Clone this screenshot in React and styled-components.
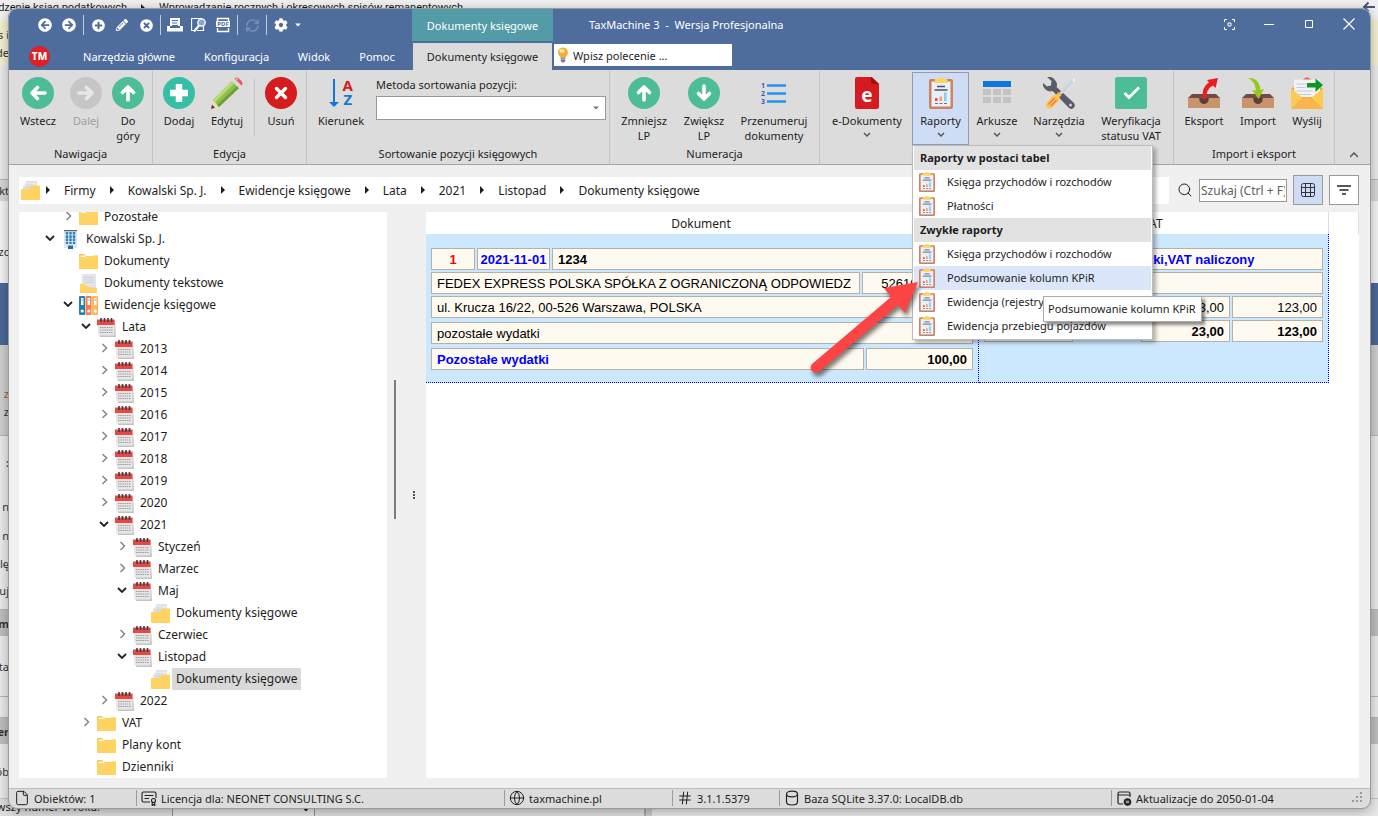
import React from 'react'
import styled, { createGlobalStyle } from 'styled-components'
import {
  FaArrowCircleLeft, FaArrowCircleRight, FaPlusCircle, FaPencilAlt, FaTimesCircle, FaCog,
} from 'react-icons/fa'
import { Search, Globe, Hash, File, RefreshCw } from 'lucide-react'

const GlobalStyle = createGlobalStyle`
  * { box-sizing: border-box; }
  body {
    margin: 0;
    font-family: "Noto Sans", "Open Sans", sans-serif;
    font-size: 12px;
    color: #1e1e1e;
  }
  button, input, select { font: inherit; color: inherit; }
  button { background: none; border: 0; padding: 0; }
  a { color: inherit; text-decoration: none; }
  ul { list-style: none; margin: 0; padding: 0; }
  svg { display: block; flex: none; }
`

/* ---------- desktop and the window behind ---------- */

const Desktop = styled.div`
  position: relative;
  display: flex;
  height: 100vh;
  padding: 9px 8px 8px 9px;
  overflow: hidden;
`

const Backdrop = styled.div`
  position: absolute;
  inset: 0;
  display: flex;
  flex-direction: column;
  overflow: hidden;
  background: #e9e9e9;
  font-size: 11px;
`

const BackTop = styled.div`
  display: flex;
  align-items: center;
  gap: 12px;
  height: 20px;
  flex: none;
  padding-bottom: 4px;
  background: #f0f0f0;
  font-family: Roboto, "Noto Sans", sans-serif;
  line-height: 14px;
  white-space: nowrap;
`

const BackClip = styled.div`
  display: flex;
  justify-content: flex-end;
  width: 127px;
  overflow: hidden;
`

const BackArrow = styled.div`
  margin-left: auto;
  padding: 0 2px 2px 0;
`

const BackRow = styled.div`
  display: flex;
  align-items: center;
  flex: none;
  height: ${(p) => p.$h}px;
  background: ${(p) => p.$bg || 'transparent'};
  border-top: ${(p) => (p.$line ? '1px solid #b4b4b4' : '0')};
  color: ${(p) => p.$color || '#333'};
  font-weight: ${(p) => (p.$bold ? 700 : 400)};
  white-space: nowrap;
`

const BackText = styled.span`
  display: flex;
  justify-content: flex-end;
  width: ${(p) => p.$w || 9}px;
  overflow: hidden;
`

const BackBottom = styled.div`
  display: flex;
  align-items: flex-start;
  flex: 1;
  background: linear-gradient(90deg, #dcdcdc 644px, #a8a8a8 644px, #a8a8a8 646px, #c8c8c8 646px, #c8c8c8 652px, #e6e6e6 652px);
  border-top: 1px solid #c4c4c4;
  white-space: nowrap;
`

const BackNumber = styled.label`
  display: flex;
  gap: 72px;
`

const BackSelect = styled.select`
  width: 143px;
  height: 18px;
  border: 1px solid #8e8e8e;
  background: #e3e3e3;
`

/* ---------- main window ---------- */

const Window = styled.div`
  position: relative;
  display: flex;
  flex: 1;
  flex-direction: column;
  min-width: 0;
  background: #f0f0f0;
  border-radius: 8px;
  outline: 1px solid #9a9a9a;
  box-shadow: 0 2px 12px rgba(0, 0, 0, 0.35);
`

const Header = styled.header`
  flex: none;
  color: #fff;
  background: #4f6d9c;
  border-radius: 8px 8px 0 0;
  font-size: 11px;
`

const TitleRow = styled.div`
  display: flex;
  height: 32px;
`

const QuickBar = styled.div`
  display: flex;
  align-items: center;
  gap: 10px;
  width: 403px;
  padding-left: 29px;
`

const QuickButton = styled.button`
  display: flex;
  align-items: center;
  justify-content: center;
  width: 14px;
  height: 20px;
  color: ${(p) => (p.disabled ? '#7f95b9' : '#fff')};
`

const QuickLine = styled.span`
  width: 1px;
  height: 20px;
  margin: 0 -3px;
  background: #c3cbd9;
`

const QuickMore = styled.button`
  display: flex;
  margin-left: -4px;
`

const ContextTab = styled.div`
  display: flex;
  align-items: center;
  justify-content: center;
  width: 141px;
  background: #539ba6;
`

const Title = styled.h1`
  margin: 0;
  padding-left: 36px;
  font-size: 11px;
  font-weight: 400;
  line-height: 32px;
  white-space: pre;
`

const WindowButtons = styled.div`
  display: flex;
  margin-left: auto;
  padding-right: 1px;
`

const WindowButton = styled.button`
  display: flex;
  align-items: center;
  justify-content: center;
  width: 40px;
  height: 30px;
`

const TabRow = styled.div`
  display: flex;
  height: 29px;
  padding-left: 20px;
`

const Logo = styled.button`
  width: 21px;
  height: 21px;
  margin: 5px 22px 0 0;
  border-radius: 50%;
  background: #e01f26;
  color: #fff;
  font-size: 10px;
  font-weight: 800;
  line-height: 21px;
`

const Tab = styled.button`
  width: ${(p) => p.$w}px;
  height: 27px;
  margin-top: 2px;
  color: ${(p) => (p.$active ? '#1e1e1e' : '#fff')};
  background: ${(p) => (p.$active ? '#dcdcdc' : 'transparent')};
`

const CommandBox = styled.label`
  display: flex;
  align-items: center;
  gap: 4px;
  width: 178px;
  height: 22px;
  margin: 3px 0 0 2px;
  padding-left: 3px;
  background: #fff;
`

const CommandInput = styled.input`
  flex: 1;
  min-width: 0;
  padding: 0;
  border: 0;
  outline: 0;
  background: none;
  &::placeholder { color: #1e1e1e; opacity: 1; }
`

/* ---------- ribbon ---------- */

const Ribbon = styled.div`
  display: flex;
  flex: none;
  height: 95px;
  background: #dcdcdc;
  border-bottom: 1px solid #a3a3a3;
  font-size: 11px;
`

const Group = styled.section`
  display: flex;
  flex-direction: column;
  flex: none;
  width: ${(p) => p.$w}px;
  border-right: 1px solid #c4c4c4;
`

const GroupItems = styled.div`
  display: flex;
  flex: 1;
  padding: 2px 0 0 ${(p) => p.$pad || 4}px;
`

const GroupTitle = styled.div`
  height: 20px;
  line-height: 18px;
  text-align: center;
`

const RibbonButton = styled.button`
  display: flex;
  flex-direction: column;
  align-items: center;
  flex: none;
  width: ${(p) => p.$w}px;
  height: 73px;
  padding-top: 4px;
  border: 1px solid ${(p) => (p.$open ? '#8c9dba' : 'transparent')};
  background: ${(p) => (p.$open ? '#cfdcf5' : 'transparent')};
  color: ${(p) => (p.disabled ? '#a0a0a0' : '#1e1e1e')};
  line-height: 15px;
  span { margin-top: 4px; }
`

const DropArrow = styled.svg`
  margin-top: 4px;
`

const ButtonLine = styled.div`
  width: 1px;
  height: 57px;
  margin: 7px 2px 0 3px;
  background: #c4c4c4;
`

const SortField = styled.label`
  display: flex;
  flex-direction: column;
  gap: 4px;
  margin-left: 5px;
  padding-top: 5px;
  line-height: 15px;
`

const SelectWrap = styled.span`
  display: flex;
  align-items: center;
  width: 230px;
  height: 24px;
  padding-right: 5px;
  border: 1px solid #999;
  background: #fff;
`

const SortSelect = styled.select`
  flex: 1;
  height: 22px;
  border: 0;
  background: none;
  appearance: none;
`

const MenuAnchor = styled.div`
  position: relative;
  z-index: 5;
  margin-left: 2px;
`

const Collapse = styled.button`
  display: flex;
  flex: 1;
  align-items: flex-end;
  justify-content: center;
  padding: 0 0 6px 2px;
`

/* ---------- reports menu ---------- */

const Menu = styled.div`
  position: absolute;
  top: 73px;
  left: 0;
  width: 241px;
  padding: 0 1px 1px;
  border: 1px solid #bcbcbc;
  background: #fff;
  box-shadow: 3px 3px 4px rgba(0, 0, 0, 0.3);
`

const MenuHead = styled.div`
  height: 24px;
  padding-left: 6px;
  background: #e2e2e2;
  font-weight: 700;
  line-height: 24px;
`

const MenuItem = styled.button`
  display: flex;
  align-items: center;
  gap: 12px;
  width: 100%;
  height: 24px;
  padding-left: 5px;
  background: ${(p) => (p.$active ? '#dbe6fb' : 'transparent')};
  line-height: 22px;
  white-space: nowrap;
`

const Tooltip = styled.div`
  position: absolute;
  top: 150px;
  left: 130px;
  height: 26px;
  padding: 0 5px 0 4px;
  border: 1px solid #ababab;
  background: #fff;
  box-shadow: 3px 3px 3px rgba(0, 0, 0, 0.45);
  line-height: 24px;
  white-space: nowrap;
`

const Pointer = styled.svg`
  position: absolute;
  top: 134px;
  left: -103px;
  filter: drop-shadow(2px 4px 2px rgba(0, 0, 0, 0.5));
  pointer-events: none;
`

/* ---------- address bar ---------- */

const AddressRow = styled.div`
  display: flex;
  align-items: center;
  flex: none;
  height: 50px;
  padding: 0 11px 0 10px;
`

const Crumbs = styled.nav`
  display: flex;
  align-items: center;
  flex: 1;
  gap: 12px;
  height: 27px;
  padding-left: 2px;
  background: #fff;
`

const CrumbIcon = styled.a`
  margin-right: -8px;
`

const SearchBox = styled.label`
  display: flex;
  align-items: center;
  gap: 6px;
  margin-left: 8px;
`

const SearchInput = styled.input`
  width: 88px;
  height: 23px;
  padding: 0 1px;
  border: 1px solid #999;
  border-radius: 0;
  background: #fff;
  &::placeholder { color: #606060; opacity: 1; }
`

const ViewButton = styled.button`
  display: flex;
  align-items: center;
  justify-content: center;
  width: 30px;
  height: 30px;
  margin-left: 6px;
  border: 1px solid #999;
  background: ${(p) => (p.$on ? '#cfdcf5' : '#fff')};
`

/* ---------- work area ---------- */

const Work = styled.main`
  display: flex;
  flex: 1;
  min-height: 0;
  margin: -3px 11px 10px 10px;
`

const TreePane = styled.ul`
  width: 368px;
  overflow: hidden;
  background: #fff;
`

const TreeRow = styled.li`
  display: flex;
  align-items: center;
  height: 22px;
  padding-left: ${(p) => 22 + p.$level * 18}px;
  &:first-child { margin-top: -6px; }
`

const Toggle = styled.button`
  display: flex;
  align-items: center;
  justify-content: center;
  width: 18px;
  height: 20px;
  margin-right: 2px;
  padding-bottom: 2px;
`

const TreeLabel = styled.a`
  margin-left: 2px;
  padding: 0 4px;
  border-radius: 1px;
  background: ${(p) => (p.$selected ? '#d9d9d9' : 'transparent')};
  line-height: 22px;
`

const Scroll = styled.div`
  width: 17px;
  padding: 168px 0 0 7px;
`

const Thumb = styled.div`
  width: 2px;
  height: 139px;
  background: #7d7d7d;
`

const Splitter = styled.div`
  display: flex;
  align-items: center;
  justify-content: center;
  width: 22px;
  padding-right: 2px;
`

const GridPane = styled.div`
  flex: 1;
  min-width: 0;
  background: #fff;
`

const Grid = styled.table`
  width: 100%;
  border-collapse: separate;
  border-spacing: 0;
  table-layout: fixed;
`

const Col = styled.col`
  width: ${(p) => (p.$w ? `${p.$w}px` : 'auto')};
`

const Th = styled.th`
  height: 22px;
  padding: 0 2px 0 0;
  border-right: 1px solid #dedede;
  font-weight: 400;
`

const Td = styled.td`
  height: 149px;
  padding: 14px 5px 0;
  vertical-align: top;
  background: #cce8ff;
  border-right: 1px dotted #00f;
  border-bottom: 1px dotted #00f;
  font-family: "Liberation Sans", Arial, sans-serif;
  font-size: 13px;
`

const CellRow = styled.div`
  display: flex;
  gap: 2px;
  margin-bottom: ${(p) => p.$gap || 2}px;
`

const Cell = styled.div`
  flex: ${(p) => (p.$w ? `0 0 ${p.$w}px` : '1 1 0')};
  min-width: 0;
  height: 22px;
  padding: 0 ${(p) => (p.$align === 'center' ? 2 : 5)}px;
  overflow: hidden;
  border: 1px solid #b5b0a8;
  background: #fffaf0;
  color: ${(p) => p.$color || '#000'};
  font-weight: ${(p) => (p.$bold ? 700 : 400)};
  line-height: 21px;
  text-align: ${(p) => p.$align || 'left'};
  white-space: nowrap;
`

const CellGap = styled.div`
  flex: 1;
`

/* ---------- status bar ---------- */

const StatusBar = styled.footer`
  display: flex;
  align-items: center;
  flex: none;
  height: 20px;
  padding: 0 0 1px 5px;
  background: #dcdcdc;
  border-top: 1px solid #bdbdbd;
  border-radius: 0 0 8px 8px;
  font-size: 11px;
`

const StatusItem = styled.div`
  display: flex;
  align-items: center;
  gap: 4px;
  flex: ${(p) => (p.$w ? `0 0 ${p.$w}px` : '1')};
  height: 16px;
  padding-left: ${(p) => (p.$first ? 0 : 4)}px;
  border-left: ${(p) => (p.$first ? '0' : '1px solid #9c9c9c')};
  white-space: nowrap;
`

/* ---------- drawings ---------- */

const arrowPaths = {
  left: 'M23 16H10M15.500 10.500L10 16l5.500 5.500',
  right: 'M9 16h13M16.500 10.500L22 16l-5.500 5.500',
  up: 'M16 23V10M10.500 15.500L16 10l5.500 5.500',
  down: 'M16 9v13M10.500 16.500L16 22l5.500-5.500',
}

const ArrowIcon = ({ dir, fill = '#4dbd97', stroke = '#fff' }) => (
  <svg width="32" height="32" viewBox="0 0 32 32" fill="none">
    <circle cx="16" cy="16" r="16" fill={fill} />
    <path d={arrowPaths[dir]} stroke={stroke} strokeWidth="3.6" strokeLinecap="round" strokeLinejoin="round" />
  </svg>
)

const AddIcon = () => (
  <svg width="32" height="32" viewBox="0 0 32 32">
    <circle cx="16" cy="16" r="16" fill="#34bfa6" />
    <path d="M16 7v18M7 16h18" stroke="#fff" strokeWidth="6.500" />
  </svg>
)

const DeleteIcon = () => (
  <svg width="32" height="32" viewBox="0 0 32 32">
    <circle cx="16" cy="16" r="16" fill="#d41c1f" />
    <path d="M11.500 11.500l9 9M20.500 11.500l-9 9" stroke="#fff" strokeWidth="3.400" strokeLinecap="round" />
  </svg>
)

const PencilIcon = () => (
  <svg width="32" height="32" viewBox="0 0 32 32">
    <path d="M0 32l2-9 6 7z" fill="#f4dcae" />
    <path d="M0 32l1-4.500 3 3.300z" fill="#444" />
    <path d="M2 23L21 4l7 7L8 30z" fill="#8fc04c" />
    <path d="M2 23L21 4l2.300 2.300L4 25.500z" fill="#b5dc78" />
    <path d="M6 28L26 9l2 2L8 30z" fill="#6d9f35" />
    <path d="M21 4l2.500-2.500 7 7L28 11z" fill="#d8dce0" />
    <path d="M23.500 1.500Q26-.5 28.500 2l2 2q2 2.500 0 4.500z" fill="#ee5563" />
    <path d="M24.500 1.500Q26 .3 27.500 1.500l-1.500 2.400z" fill="#f9a4aa" />
  </svg>
)

const SortIcon = () => (
  <svg width="32" height="32" viewBox="0 0 32 32" fontFamily="Noto Sans" fontWeight="700" fontSize="15">
    <path d="M9 2v25" stroke="#1177dd" strokeWidth="2" />
    <path d="M4 25h10l-5 5z" fill="#1177dd" />
    <text x="17.500" y="13.500" fill="#d41c1f">A</text>
    <text x="18.500" y="28" fill="#1177dd">Z</text>
  </svg>
)

const RenumberIcon = () => (
  <svg width="32" height="32" viewBox="0 0 32 32" fontFamily="Noto Sans" fontWeight="700" fontSize="7">
    <path d="M9 8.500h19M9 16.500h19M9 24.500h19" stroke="#2492f0" strokeWidth="2.600" />
    <text x="3" y="11" fill="#3f5ab0">1</text>
    <text x="3" y="19" fill="#3f5ab0">2</text>
    <text x="3" y="27" fill="#3f5ab0">3</text>
  </svg>
)

const EDocIcon = () => (
  <svg width="32" height="32" viewBox="0 0 32 32">
    <path d="M6 0h15l7 7v23a2 2 0 0 1-2 2H6a2 2 0 0 1-2-2V2a2 2 0 0 1 2-2z" fill="#d51b1f" />
    <path d="M20 0l8 7h-6q-1.500-.3-2-2z" fill="#a30f00" />
    <text x="16" y="25" fill="#fff" fontFamily="Noto Sans" fontWeight="700" fontSize="19" textAnchor="middle">e</text>
  </svg>
)

const ReportIcon = ({ w = 32, h = 32 }) => (
  <svg width={w} height={h} viewBox="4 0 24 32" preserveAspectRatio="none">
    <rect x="4" y="2" width="24" height="30" rx="2" fill="#d0835b" />
    <rect x="6.500" y="4.500" width="19" height="25" fill="#eaf0fa" />
    <path d="M10.500 2h2.500q.5-2 3-2t3 2h2.500q.8 0 .8 1v3H9.700V3q0-1 .8-1z" fill="#fcd462" />
    <path d="M12 9.500h8M9.500 13h13" stroke="#4a5162" strokeWidth="1.300" />
    <path d="M10 21h2.600v3H10z" fill="#f0504b" />
    <path d="M14.500 19.500h2.600V24h-2.600z" fill="#f5a268" />
    <path d="M19 15.500h2.600V24H19z" fill="#8ccbee" />
    <path d="M10 26.500h3m1.500 0h3m1.500 0h3" stroke="#6c7282" strokeWidth="1.100" />
  </svg>
)

const LargeReport = () => (
  <svg width="32" height="32" viewBox="0 0 32 32">
    <svg x="4" width="24" height="32"><ReportIcon w="24" /></svg>
  </svg>
)

const SheetIcon = () => (
  <svg width="32" height="32" viewBox="0 0 32 32">
    <path d="M2 4h28v6H2z" fill="#1177dd" />
    <path d="M2 12h8v6H2zM12 12h8v6h-8zM22 12h8v6h-8zM2 20h8v6H2zM12 20h8v6h-8zM22 20h8v6h-8z" fill="#c3c3c3" />
  </svg>
)

const ToolsIcon = () => (
  <svg width="32" height="32" viewBox="0 0 32 32">
    <path d="M4 0Q9-1 12 3t1.500 7L31 26q2 3-.5 5t-5-.5L9.500 14Q5 15.500 2 12T0 6l4 3.500 4-1 .5-4.500z" fill="#595b66" />
    <circle cx="27.500" cy="28" r="1.500" fill="#cdd0d8" />
    <path d="M29 2.500l2 2L18 18l-2-2z" fill="#cfd3de" />
    <path d="M30 1.500l2 .5-.5 3-2-.5z" fill="#f2f4f8" />
    <path d="M15 15l3.500 3.500-2 1.500q.5 2.500-1.500 4.500l-6 6q-2.500 2-5 0t0-5l6-6.500q2-2 4-2z" fill="#fdc34a" />
    <path d="M5.500 27.500l6-6.500M8 29l5.500-6" stroke="#ed7161" strokeWidth="1.200" />
  </svg>
)

const CheckIcon = () => (
  <svg width="32" height="32" viewBox="0 0 32 32">
    <rect width="32" height="32" rx="2.500" fill="#4dbd97" />
    <path d="M9.500 16l4.500 4.500 10-10" fill="none" stroke="#fff" strokeWidth="2.800" />
  </svg>
)

const TrayIcon = ({ out }) => (
  <svg width="32" height="32" viewBox="0 0 32 32">
    <path d="M4 17h24l4 4H0z" fill="#714b44" />
    <path d="M0 21h11q1 6 5 6t5-6h11v10H0z" fill="#c9936c" />
    <path d="M11 21h10q-.5 6-5 6t-5-6z" fill="#5e3d3a" />
    {out
      ? <path d="M15 22Q13 10 21 5.500L19 3l11-2-2.500 10-2.500-2.500Q18 12 18 22z" fill="#ec1c24" />
      : <path d="M6 1q11-1 12.500 12L22 12l-5.500 10L10 13l4 .5Q13 4 6 1z" fill="#94c91b" />}
  </svg>
)

const SendIcon = () => (
  <svg width="32" height="32" viewBox="0 0 32 32">
    <path d="M11 3l5-3 5 3z" fill="#ee6161" />
    <path d="M0 12L4 9h24l4 3v19a1 1 0 0 1-1 1H1a1 1 0 0 1-1-1z" fill="#e3a63c" />
    <path d="M3 2.500h26V20H3z" fill="#f2f3f5" />
    <path d="M5.500 7H15M5.500 10.500H15M5.500 14h16M8 17.500h12" stroke="#c2cad8" strokeWidth="1.200" />
    <path d="M0 11l12 10L0 32zM32 11L20 21l12 11z" fill="#fdcb55" />
    <path d="M0 32l13-11q3-2 6 0l13 11z" fill="#f8b64c" />
    <path d="M16 6h8.500V1.500L32 8l-7.500 7v-4.500H16z" fill="#0a9a24" />
  </svg>
)

const BulbIcon = () => (
  <svg width="12" height="16" viewBox="0 0 12 16">
    <path d="M6 .5a5 5 0 0 1 5 5q0 2.500-2.500 5h-5Q1 8 1 5.500a5 5 0 0 1 5-5z" fill="#f9ae32" />
    <ellipse cx="5" cy="4" rx="2.500" ry="2" fill="#ffeaa8" />
    <path d="M3.700 10.500h4.600v3.500L7 15.500H5L3.700 14z" fill="#787d8c" />
    <path d="M3.700 12.200h4.600" stroke="#c0c5d0" />
  </svg>
)

const Chevron = ({ dir = 'down', color = '#555' }) => (
  <DropArrow width="8" height="6" viewBox="0 0 8 6" fill="none">
    <path d={dir === 'down' ? 'M1 1l3 3 3-3' : 'M0 5l4-4 4 4'} stroke={color} strokeWidth="1.500" />
  </DropArrow>
)

const Triangle = ({ right, color = '#1e1e1e' }) => (
  <svg width="8" height="8" viewBox="0 0 8 8">
    <path d={right ? 'M2 0l4 4-4 4z' : 'M1 2.500h6l-3 3z'} fill={color} />
  </svg>
)

const FolderIcon = () => (
  <svg width="19" height="15" viewBox="0 0 19 15">
    <path d="M0 2V1q0-1 1-1h4l2 2h11q1 0 1 1v10H0z" fill="#f5c64c" />
    <path d="M1.500 1.500H6L8 3.500h10V5H1.500z" fill="#f4f4ee" />
    <path d="M0 3h6l1.500 1L9 2.500l9-1.500 1 1v13H0z" fill="#fed362" />
  </svg>
)

const DocsIcon = () => (
  <svg width="19" height="19" viewBox="0 0 19 19">
    <path d="M5 0h11v8H5z" fill="#dfe3e7" />
    <path d="M3.500 2H15v8H3.500z" fill="#e9ecef" />
    <path d="M2 4.500h11V12H2z" fill="#dde1e5" />
    <path d="M4 6.500h7M5 4h7" stroke="#c6ccd2" strokeWidth=".7" />
    <path d="M0 9q0-1 1-1h7q1 0 2-2l1-1.500h7q1 0 1 1V18q0 1-1 1H1q-1 0-1-1z" fill="#fed362" />
  </svg>
)

const TextDocsIcon = () => (
  <svg width="19" height="19" viewBox="0 0 19 19">
    <path d="M3 0h14v14H3z" fill="#e1e5e9" />
    <path d="M5.500 3.500h9M5.500 6h9M5.500 8.500h9" stroke="#c5ccd3" strokeWidth=".8" />
    <path d="M1 10q4-1 7 2 3 2.500 10 1.500V18q0 1-1 1H2q-1 0-1-1z" fill="#fed362" />
  </svg>
)

const BuildingIcon = () => (
  <svg width="19" height="19" viewBox="0 0 19 19">
    <path d="M3 1h13v17H3z" fill="#dfe6ec" />
    <path d="M3 0h13v1.200H3z" fill="#5c6670" />
    <path d="M6 2v12M9.500 2v12M13 2v12" stroke="#2980ba" strokeWidth="2.400" strokeDasharray="2.600 .7" />
    <path d="M7 15.500h5V19H7z" fill="#1e6fa8" />
  </svg>
)

const BindersIcon = () => (
  <svg width="19" height="19" viewBox="0 0 19 19">
    <rect width="6" height="19" rx="1" fill="#2580b3" />
    <rect x="6.500" width="6" height="19" rx="1" fill="#fd7b45" />
    <rect x="13" width="6" height="19" rx="1" fill="#fdb55f" />
    <path d="M2 2h2.500v7H2zM8.500 2H11v7H8.500zM15 2h2.500v7H15z" fill="#fff" />
    <circle cx="3.200" cy="15" r="1.600" fill="#fff" />
    <circle cx="9.700" cy="15" r="1.600" fill="#fff" />
    <circle cx="16.200" cy="15" r="1.600" fill="#fff" />
    <path d="M2.200 4h2m4.500 0h2m4.500 0h2" stroke="#7a8a99" strokeWidth=".8" />
  </svg>
)

const CalendarIcon = () => (
  <svg width="19" height="19" viewBox="0 0 19 19">
    <path d="M2 3h16l1 16H3z" fill="#c4c4c4" />
    <path d="M0 2h17.500v15.500H1.500z" fill="#e6e6e6" />
    <path d="M0 1.500h17.500v5.500H0z" fill="#e8483f" />
    <path d="M4 0v4M7.500 0v4M11 0v4M14.500 0v4" stroke="#3a3f48" strokeWidth="1.600" />
    <path d="M3 9.500h12.500M3 12h12.500M3 14.500h12.500" stroke="#9c9c9c" strokeWidth="1.200" strokeDasharray="1.500 .7" />
  </svg>
)

const TreeToggle = ({ open }) => (
  <svg width="10" height="10" viewBox="0 0 10 10" fill="none">
    {open
      ? <path d="M1 3l4 4 4-4" stroke="#222" strokeWidth="1.800" />
      : <path d="M3.500 1l4 4-4 4" stroke="#8a8a8a" strokeWidth="1.600" />}
  </svg>
)

const PrintIcon = () => (
  <svg width="16" height="16" viewBox="0 0 16 16">
    <path d="M3 1h10v8H3z" fill="#fff" />
    <path d="M5 3.500h6M5 6h5M5 8.500h6" stroke="#4f6d9c" />
    <path d="M0 9h3v2h10V9h3v5.500H0z" fill="#fff" />
  </svg>
)

const PreviewIcon = () => (
  <svg width="16" height="16" viewBox="0 0 16 16" fill="none" stroke="#fff">
    <path d="M11 1.500H.5v12H3M6 13.500h6.500V9" strokeWidth="1.200" />
    <circle cx="10.500" cy="5.500" r="3.700" fill="#8ea5cd" strokeWidth="1.300" />
    <path d="M8 8.500l-5 6" strokeWidth="2" />
  </svg>
)

const PdfIcon = () => (
  <svg width="14" height="16" viewBox="0 0 14 16">
    <path d="M1.500 4V1.500h11V4M1.500 11v3.500h11V11" fill="none" stroke="#fff" strokeWidth="1.400" />
    <path d="M0 4h14v6H0z" fill="#fff" />
    <text x="7" y="9" fontSize="6" fontWeight="700" textAnchor="middle" fill="#4f6d9c">PDF</text>
  </svg>
)

const GridIcon = () => (
  <svg width="16" height="16" viewBox="0 0 16 16" fill="none" stroke="#333">
    <rect x="1.500" y="1.500" width="13" height="13" rx="2" />
    <path d="M5.500 1v14M10.500 1v14M1 5.500h14M1 10.500h14" />
  </svg>
)

const FilterIcon = () => (
  <svg width="16" height="16" viewBox="0 0 16 16" stroke="#222" strokeWidth="1.300">
    <path d="M1 4h14M3.500 8h9M6 12h4" />
  </svg>
)

const LicenseIcon = () => (
  <svg width="16" height="16" viewBox="0 0 16 16" fill="none" stroke="#222" strokeWidth="1.100">
    <path d="M9 12H2.500Q1 12 1 10.500v-7Q1 2 2.500 2h11Q15 2 15 3.500V8M3.500 5.500h9M3.500 8.500H8" />
    <circle cx="12.500" cy="10.500" r="2" />
    <path d="M11.200 12.500V15.500l1.300-1 1.300 1v-3" />
  </svg>
)

const DatabaseIcon = () => (
  <svg width="16" height="16" viewBox="0 0 16 16" fill="none" stroke="#222" strokeWidth="1.200">
    <ellipse cx="8" cy="4" rx="5.500" ry="2.800" />
    <path d="M2.500 4v8q0 3 5.500 3t5.500-3V4" />
  </svg>
)

const UpdateIcon = () => (
  <svg width="16" height="16" viewBox="0 0 16 16" fill="none" stroke="#222" strokeWidth="1.200">
    <path d="M7 14H3.500Q2 14 2 12.500v-9Q2 2 3.500 2h9Q14 2 14 3.500V7M2 5h12" />
    <circle cx="11.500" cy="12" r="3.200" fill="#222" />
    <path d="M9.800 12.700h3.400M9.800 11.200h3.400" stroke="#dcdcdc" strokeWidth=".8" />
  </svg>
)

const treeIcons = {
  folder: <FolderIcon />,
  docs: <DocsIcon />,
  text: <TextDocsIcon />,
  company: <BuildingIcon />,
  binders: <BindersIcon />,
  calendar: <CalendarIcon />,
}

/* ---------- data ---------- */

const year = (label) => ({ label, level: 3, icon: 'calendar', open: false })

const tree = [
  { label: 'Pozostałe', level: 1, icon: 'folder', open: false },
  { label: 'Kowalski Sp. J.', level: 0, icon: 'company', open: true },
  { label: 'Dokumenty', level: 1, icon: 'folder' },
  { label: 'Dokumenty tekstowe', level: 1, icon: 'text' },
  { label: 'Ewidencje księgowe', level: 1, icon: 'binders', open: true },
  { label: 'Lata', level: 2, icon: 'calendar', open: true },
  ...['2013', '2014', '2015', '2016', '2017', '2018', '2019', '2020'].map(year),
  { label: '2021', level: 3, icon: 'calendar', open: true },
  { label: 'Styczeń', level: 4, icon: 'calendar', open: false },
  { label: 'Marzec', level: 4, icon: 'calendar', open: false },
  { label: 'Maj', level: 4, icon: 'calendar', open: true },
  { label: 'Dokumenty księgowe', level: 5, icon: 'docs' },
  { label: 'Czerwiec', level: 4, icon: 'calendar', open: false },
  { label: 'Listopad', level: 4, icon: 'calendar', open: true },
  { label: 'Dokumenty księgowe', level: 5, icon: 'docs', selected: true },
  year('2022'),
  { label: 'VAT', level: 2, icon: 'folder', open: false },
  { label: 'Plany kont', level: 2, icon: 'folder' },
  { label: 'Dzienniki', level: 2, icon: 'folder' },
]

const crumbs = ['Firmy', 'Kowalski Sp. J.', 'Ewidencje księgowe', 'Lata', '2021', 'Listopad', 'Dokumenty księgowe']

const menu = [
  { head: 'Raporty w postaci tabel' },
  { label: 'Księga przychodów i rozchodów' },
  { label: 'Płatności' },
  { head: 'Zwykłe raporty' },
  { label: 'Księga przychodów i rozchodów' },
  { label: 'Podsumowanie kolumn KPiR', active: true },
  { label: 'Ewidencja (rejestry) VAT' },
  { label: 'Ewidencja przebiegu pojazdów' },
]

const backRows = [
  { h: 5, bg: '#f3efd0' },
  { h: 18, bg: '#f3efd0', text: 's i' },
  { h: 18, bg: '#f3efd0', text: 'de' },
  { h: 4, bg: '#f3efd0' },
  { h: 114 },
  { h: 22, bg: '#d6d6d6', text: 'kt', line: true },
  { h: 38, bg: '#f2f2f2' },
  { h: 24, bg: '#f2f2f2', text: 'zc' },
  { h: 20, bg: '#f2f2f2' },
  { h: 62, bg: '#4a6796' },
  { h: 39, bg: '#cdcdcd' },
  { h: 18, bg: '#cdcdcd', text: 'z', color: '#a5562f' },
  { h: 18, bg: '#cdcdcd', text: 'z' },
  { h: 15, bg: '#cdcdcd' },
  { h: 54, line: true, text: ':', color: '#2a4b8d', bold: true },
  { h: 34, text: 'n' },
  { h: 24, text: 'n' },
  { h: 32, text: 'lę' },
  { h: 22, text: 'uj' },
  { h: 8 },
  { h: 27, bg: '#bdbdbd', text: 'm', bold: true, line: true },
  { h: 60, text: 'ta' },
  { h: 21, line: true },
  { h: 27, bg: '#bdbdbd', text: 'er', bold: true, line: true },
  { h: 54, text: 'ób' },
]

/* ---------- parts ---------- */

const BackWindow = () => (
  <Backdrop aria-hidden="true">
    <BackTop>
      <BackClip>Prowadzenie ksiąg podatkowych</BackClip>
      <Triangle right />
      <span>Wprowadzanie rocznych i okresowych spisów remanentowych</span>
      <BackArrow>
        <svg width="14" height="12" viewBox="0 0 14 12" fill="none" stroke="#4a5680" strokeWidth="2">
          <path d="M13 6H2M6.500 1.500L2 6l4.500 4.500" />
        </svg>
      </BackArrow>
    </BackTop>
    {backRows.map((r, i) => (
      <BackRow key={i} $h={r.h} $bg={r.bg} $line={r.line} $color={r.color} $bold={r.bold}>
        {r.text && <BackText>{r.text}</BackText>}
      </BackRow>
    ))}
    <BackBottom>
      <BackNumber>
        <BackText $w={100}>Pierwszy numer w roku:</BackText>
        <BackSelect />
      </BackNumber>
    </BackBottom>
  </Backdrop>
)

const BigButton = ({ icon, label, second, w, drop, open, disabled }) => (
  <RibbonButton type="button" $w={w} $open={open} disabled={disabled}>
    {icon}
    <span>{label}{second && <><br />{second}</>}</span>
    {drop && <Chevron />}
  </RibbonButton>
)

const ReportsMenu = () => (
  <MenuAnchor>
    <BigButton icon={<LargeReport />} label="Raporty" w={57} drop open />
    <Menu>
      {menu.map((m, i) => (m.head
        ? <MenuHead key={i}>{m.head}</MenuHead>
        : (
          <MenuItem key={i} type="button" $active={m.active}>
            <ReportIcon w="16" h="20" />
            {m.label}
          </MenuItem>
        )))}
      <Tooltip role="tooltip">Podsumowanie kolumn KPiR</Tooltip>
      <Pointer width="112" height="100" viewBox="0 0 112 100" fill="#fd4444">
        <path d="M108 2L95 33l-7-8L9 92q-4 2-7-1t0-7L81 17l-7-9z" />
      </Pointer>
    </Menu>
  </MenuAnchor>
)

const TopHeader = () => (
  <Header>
    <TitleRow>
      <QuickBar>
        <QuickButton type="button" aria-label="Wstecz"><FaArrowCircleLeft size={14} /></QuickButton>
        <QuickButton type="button" aria-label="Dalej"><FaArrowCircleRight size={14} /></QuickButton>
        <QuickLine />
        <QuickButton type="button" aria-label="Dodaj"><FaPlusCircle size={13} /></QuickButton>
        <QuickButton type="button" aria-label="Edytuj"><FaPencilAlt size={12} /></QuickButton>
        <QuickButton type="button" aria-label="Usuń"><FaTimesCircle size={13} /></QuickButton>
        <QuickLine />
        <QuickButton type="button" aria-label="Drukuj"><PrintIcon /></QuickButton>
        <QuickButton type="button" aria-label="Podgląd"><PreviewIcon /></QuickButton>
        <QuickButton type="button" aria-label="PDF"><PdfIcon /></QuickButton>
        <QuickLine />
        <QuickButton type="button" aria-label="Odśwież" disabled><RefreshCw size={15} /></QuickButton>
        <QuickLine />
        <QuickButton type="button" aria-label="Ustawienia"><FaCog size={14} /></QuickButton>
        <QuickMore type="button" aria-label="Więcej"><Triangle color="#fff" /></QuickMore>
      </QuickBar>
      <ContextTab>Dokumenty księgowe</ContextTab>
      <Title>TaxMachine 3  -  Wersja Profesjonalna</Title>
      <WindowButtons>
        <WindowButton type="button" aria-label="Pełny ekran">
          <svg width="11" height="11" viewBox="0 0 11 11" fill="none" stroke="#fff">
            <path d="M.5 3V.5H3M8 .5h2.500V3M10.500 8v2.500H8M3 10.500H.5V8M4 4h3v3H4z" />
          </svg>
        </WindowButton>
        <WindowButton type="button" aria-label="Minimalizuj">
          <svg width="10" height="10" viewBox="0 0 10 10"><path d="M0 5.500h10" stroke="#fff" /></svg>
        </WindowButton>
        <WindowButton type="button" aria-label="Maksymalizuj">
          <svg width="8" height="8" viewBox="0 0 8 8"><path d="M.5.5h7v7h-7z" stroke="#fff" fill="none" /></svg>
        </WindowButton>
        <WindowButton type="button" aria-label="Zamknij">
          <svg width="12" height="12" viewBox="0 0 12 12"><path d="M.5.5l11 11M11.500.5l-11 11" stroke="#fff" strokeWidth="1.200" /></svg>
        </WindowButton>
      </WindowButtons>
    </TitleRow>
    <TabRow>
      <Logo type="button">TM</Logo>
      <Tab type="button" $w={114}>Narzędzia główne</Tab>
      <Tab type="button" $w={101}>Konfiguracja</Tab>
      <Tab type="button" $w={54}>Widok</Tab>
      <Tab type="button" $w={72}>Pomoc</Tab>
      <Tab type="button" $w={139} $active>Dokumenty księgowe</Tab>
      <CommandBox>
        <BulbIcon />
        <CommandInput placeholder="Wpisz polecenie ..." />
      </CommandBox>
    </TabRow>
  </Header>
)

const RibbonBar = () => (
  <Ribbon>
    <Group $w={144}>
      <GroupItems $pad={5}>
        <BigButton icon={<ArrowIcon dir="left" />} label="Wstecz" w={48} />
        <BigButton icon={<ArrowIcon dir="right" fill="#c6c6c6" stroke="#e8e8e8" />} label="Dalej" w={48} disabled />
        <BigButton icon={<ArrowIcon dir="up" />} label="Do" second="góry" w={36} />
      </GroupItems>
      <GroupTitle>Nawigacja</GroupTitle>
    </Group>
    <Group $w={154}>
      <GroupItems $pad={2}>
        <BigButton icon={<AddIcon />} label="Dodaj" w={48} />
        <BigButton icon={<PencilIcon />} label="Edytuj" w={48} />
        <ButtonLine />
        <BigButton icon={<DeleteIcon />} label="Usuń" w={48} />
      </GroupItems>
      <GroupTitle>Edycja</GroupTitle>
    </Group>
    <Group $w={303}>
      <GroupItems>
        <BigButton icon={<SortIcon />} label="Kierunek" w={60} />
        <SortField>
          Metoda sortowania pozycji:
          <SelectWrap>
            <SortSelect />
            <Triangle color="#777" />
          </SelectWrap>
        </SortField>
      </GroupItems>
      <GroupTitle>Sortowanie pozycji księgowych</GroupTitle>
    </Group>
    <Group $w={210}>
      <GroupItems>
        <BigButton icon={<ArrowIcon dir="up" />} label="Zmniejsz" second="LP" w={60} />
        <BigButton icon={<ArrowIcon dir="down" />} label="Zwiększ" second="LP" w={60} />
        <BigButton icon={<RenumberIcon />} label="Przenumeruj" second="dokumenty" w={80} />
      </GroupItems>
      <GroupTitle>Numeracja</GroupTitle>
    </Group>
    <Group $w={354}>
      <GroupItems>
        <BigButton icon={<EDocIcon />} label="e-Dokumenty" w={86} drop />
        <ReportsMenu />
        <BigButton icon={<SheetIcon />} label="Arkusze" w={56} drop />
        <BigButton icon={<ToolsIcon />} label="Narzędzia" w={68} drop />
        <BigButton icon={<CheckIcon />} label="Weryfikacja" second="statusu VAT" w={76} />
      </GroupItems>
    </Group>
    <Group $w={161}>
      <GroupItems $pad={3}>
        <BigButton icon={<TrayIcon out />} label="Eksport" w={54} />
        <BigButton icon={<TrayIcon />} label="Import" w={54} />
        <BigButton icon={<SendIcon />} label="Wyślij" w={44} />
      </GroupItems>
      <GroupTitle>Import i eksport</GroupTitle>
    </Group>
    <Collapse type="button" aria-label="Zwiń wstążkę"><Chevron dir="up" /></Collapse>
  </Ribbon>
)

const AddressBar = () => (
  <AddressRow>
    <Crumbs>
      <CrumbIcon href="#" aria-label="Start"><DocsIcon /></CrumbIcon>
      {crumbs.map((c) => (
        <React.Fragment key={c}>
          <Triangle right />
          <a href="#">{c}</a>
        </React.Fragment>
      ))}
    </Crumbs>
    <SearchBox>
      <Search size={16} strokeWidth={1.500} />
      <SearchInput placeholder="Szukaj (Ctrl + F)" />
    </SearchBox>
    <ViewButton type="button" aria-label="Siatka" $on><GridIcon /></ViewButton>
    <ViewButton type="button" aria-label="Filtr"><FilterIcon /></ViewButton>
  </AddressRow>
)

const Tree = () => (
  <TreePane>
    {tree.map((n, i) => (
      <TreeRow key={i} $level={n.level}>
        {n.open === undefined
          ? <Toggle as="span" />
          : <Toggle type="button" aria-label={n.label}><TreeToggle open={n.open} /></Toggle>}
        {treeIcons[n.icon]}
        <TreeLabel href="#" $selected={n.selected}>{n.label}</TreeLabel>
      </TreeRow>
    ))}
  </TreePane>
)

const Documents = () => (
  <GridPane>
    <Grid>
      <colgroup>
        <Col $w={553} />
        <Col $w={350} />
        <Col />
      </colgroup>
      <thead>
        <tr>
          <Th>Dokument</Th>
          <Th>VAT</Th>
          <Th />
        </tr>
      </thead>
      <tbody>
        <tr>
          <Td>
            <CellRow>
              <Cell $w={44} $bold $color="#f00" $align="center">1</Cell>
              <Cell $w={73} $bold $color="#00f" $align="center">2021-11-01</Cell>
              <Cell $bold>1234</Cell>
            </CellRow>
            <CellRow>
              <Cell $w={429}>FEDEX EXPRESS POLSKA SPÓŁKA Z OGRANICZONĄ ODPOWIEDZ</Cell>
              <Cell $align="center">5261026528</Cell>
            </CellRow>
            <CellRow $gap={4}>
              <Cell>ul. Krucza 16/22, 00-526 Warszawa, POLSKA</Cell>
            </CellRow>
            <CellRow $gap={4}>
              <Cell>pozostałe wydatki</Cell>
            </CellRow>
            <CellRow>
              <Cell $w={433} $bold $color="#00f">Pozostałe wydatki</Cell>
              <Cell $bold $align="right">100,00</Cell>
            </CellRow>
          </Td>
          <Td>
            <CellRow>
              <Cell $w={60} $bold>VAT</Cell>
              <Cell $bold $color="#00f">Pozostałe wydatki,VAT naliczony</Cell>
            </CellRow>
            <CellRow>
              <Cell />
            </CellRow>
            <CellRow>
              <Cell $w={89} $align="right">23%</Cell>
              <Cell $align="right">100,00</Cell>
              <Cell $w={89} $align="right">23,00</Cell>
              <Cell $w={91} $align="right">123,00</Cell>
            </CellRow>
            <CellRow>
              <Cell $w={89} $bold $align="right">100,00</Cell>
              <CellGap />
              <Cell $w={89} $bold $align="right">23,00</Cell>
              <Cell $w={91} $bold $align="right">123,00</Cell>
            </CellRow>
          </Td>
          <td />
        </tr>
      </tbody>
    </Grid>
  </GridPane>
)

const Status = () => (
  <StatusBar>
    <StatusItem $w={122} $first><File size={16} strokeWidth={1.500} />Obiektów: 1</StatusItem>
    <StatusItem $w={368}><LicenseIcon />Licencja dla: NEONET CONSULTING S.C.</StatusItem>
    <StatusItem $w={168}><Globe size={16} strokeWidth={1.500} /><a href="#">taxmachine.pl</a></StatusItem>
    <StatusItem $w={107}><Hash size={16} strokeWidth={1.500} />3.1.1.5379</StatusItem>
    <StatusItem $w={332}><DatabaseIcon />Baza SQLite 3.37.0: LocalDB.db</StatusItem>
    <StatusItem><UpdateIcon />Aktualizacje do 2050-01-04</StatusItem>
    <svg width="20" height="12" viewBox="0 0 20 12" fill="#999">
      <path d="M10 0h2v2h-2zM10 4h2v2h-2zM6 4h2v2H6zM10 8h2v2h-2zM6 8h2v2H6zM2 8h2v2H2z" />
    </svg>
  </StatusBar>
)

const App = () => (
  <>
    <GlobalStyle />
    <Desktop>
      <BackWindow />
      <Window>
        <TopHeader />
        <RibbonBar />
        <AddressBar />
        <Work>
          <Tree />
          <Scroll><Thumb /></Scroll>
          <Splitter>
            <svg width="2" height="8" viewBox="0 0 2 8" fill="#555"><path d="M0 0h2v2H0zM0 3h2v2H0zM0 6h2v2H0z" /></svg>
          </Splitter>
          <Documents />
        </Work>
        <Status />
      </Window>
    </Desktop>
  </>
)

export default App
